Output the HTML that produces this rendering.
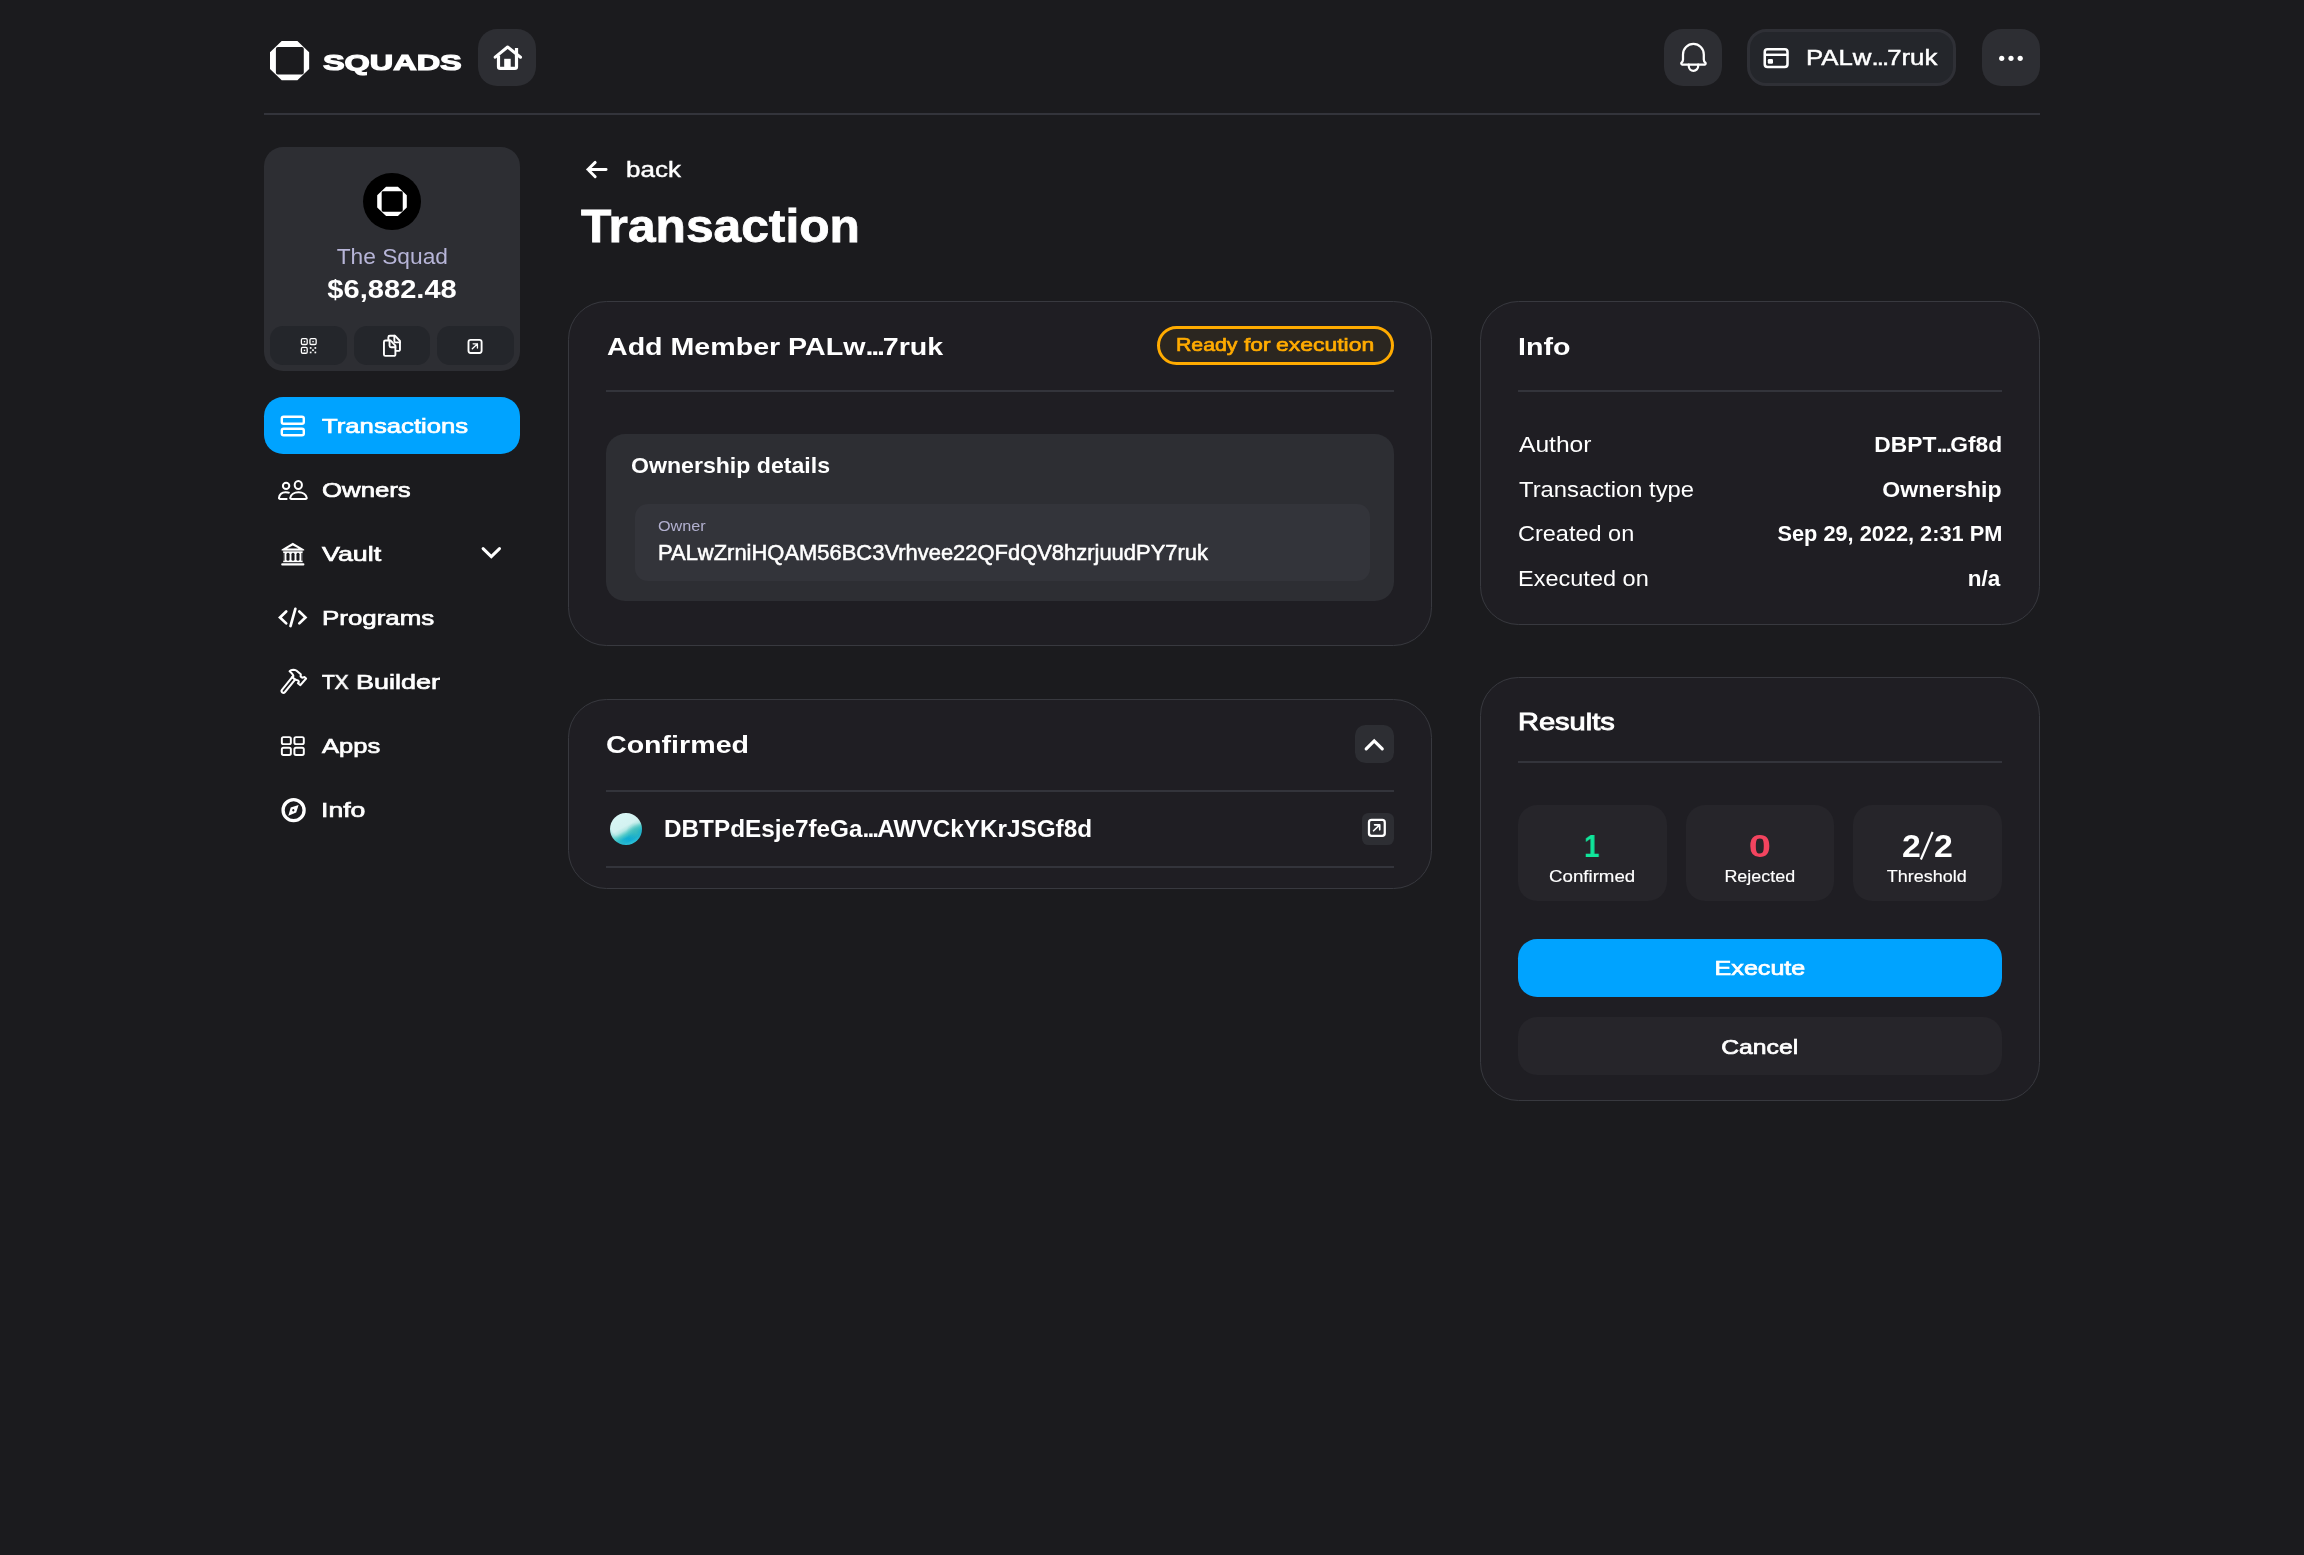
<!DOCTYPE html>
<html><head><meta charset="utf-8"><title>Squads - Transaction</title>
<style>
*{box-sizing:border-box;margin:0;padding:0}
html,body{width:2304px;height:1555px;background:#1b1b1e;color:#fff;font-family:"Liberation Sans",sans-serif}
.a{position:absolute}
.t{position:absolute;white-space:nowrap;line-height:1;will-change:transform}
.btn{position:absolute;background:#2d2e33;border-radius:19.2px}
.card{position:absolute;background:#1f1e23;border:1.7px solid #38393f;border-radius:38.4px}
.hr{position:absolute;height:2px;background:#33343b}
.sb{position:absolute;background:#24262b;border-radius:12.8px;top:326.2px;width:76.8px;height:38.4px}
.rb{position:absolute;background:#26252a;border-radius:19.2px;top:804.8px;width:148.3px;height:95.8px}
svg{position:absolute;overflow:visible}
</style></head><body>
<!-- HEADER -->
<div class="btn" style="left:478.4px;top:28.8px;width:57.6px;height:57.6px"></div>
<div class="btn" style="left:1664px;top:28.8px;width:57.6px;height:57.6px"></div>
<div class="btn" style="left:1747.2px;top:28.8px;width:209.3px;height:57.6px;background:#24262b;border:3.2px solid #2f3036"></div>
<div class="btn" style="left:1982.4px;top:28.8px;width:57.6px;height:57.6px"></div>
<div class="hr" style="left:264px;top:113.4px;width:1776px"></div>
<!-- SIDEBAR -->
<div class="a" style="left:264px;top:147px;width:256px;height:224px;background:#2d2e33;border-radius:19.2px"></div>
<div class="a" style="left:363.2px;top:172.8px;width:57.6px;height:57.6px;background:#000;border-radius:50%"></div>
<div class="sb" style="left:270.4px"></div>
<div class="sb" style="left:353.6px"></div>
<div class="sb" style="left:436.8px"></div>
<div class="a" style="left:264px;top:396.8px;width:256px;height:57.6px;background:#00a3ff;border-radius:19.2px"></div>
<!-- MAIN CARD 1 -->
<div class="card" style="left:568px;top:300.6px;width:864px;height:345.8px"></div>
<div class="hr" style="left:606.4px;top:390.4px;width:787.2px"></div>
<div class="a" style="left:606.4px;top:433.6px;width:787.2px;height:167.8px;background:#2d2e33;border-radius:19.2px"></div>
<div class="a" style="left:635.2px;top:504.2px;width:735px;height:76.4px;background:#33343a;border-radius:12.8px"></div>
<div class="a" style="left:1156.8px;top:325.8px;width:237.2px;height:39.6px;background:#2b2620;border:3.6px solid #ffab00;border-radius:20px"></div>
<!-- MAIN CARD 2 -->
<div class="card" style="left:568px;top:699.2px;width:864px;height:189.8px"></div>
<div class="hr" style="left:606.4px;top:790.4px;width:787.2px"></div>
<div class="hr" style="left:606.4px;top:865.5px;width:787.2px"></div>
<div class="a" style="left:1355.2px;top:724.7px;width:38.4px;height:38.4px;background:#2d2e33;border-radius:10.5px"></div>
<div class="a" style="left:1361.6px;top:812.7px;width:32px;height:32px;background:#2d2e33;border-radius:6.4px"></div>
<div class="a" style="left:609.6px;top:812.5px;width:32.2px;height:32.6px;border-radius:50%;background:radial-gradient(circle at 80% 60%,rgba(62,188,186,.8) 0%,rgba(62,188,186,0) 30%),radial-gradient(circle at 52% 30%,rgba(70,200,198,0) 58%,rgba(70,200,198,.5) 76%),linear-gradient(151deg,#d8f6f5 13%,#d3f2f1 43%,#b5e8e5 51%,#55cbc9 60%,#14b0d0 69%,#05a5d9 78%,#12bbe6 87%)"></div>
<!-- INFO CARD -->
<div class="card" style="left:1480px;top:300.6px;width:560px;height:324.8px"></div>
<div class="hr" style="left:1518.4px;top:390.4px;width:483.2px"></div>
<!-- RESULTS CARD -->
<div class="card" style="left:1480px;top:676.6px;width:560px;height:424.2px"></div>
<div class="hr" style="left:1518.4px;top:761.4px;width:483.2px"></div>
<div class="rb" style="left:1518.4px"></div>
<div class="rb" style="left:1685.9px"></div>
<div class="rb" style="left:1853.3px"></div>
<div class="a" style="left:1518.4px;top:939.2px;width:483.2px;height:57.6px;background:#00a3ff;border-radius:19.2px"></div>
<div class="a" style="left:1518.4px;top:1017.4px;width:483.2px;height:57.6px;background:#26252a;border-radius:19.2px"></div>

<!-- TEXT -->
<div class="t" style="left:323.40px;top:50.70px;font-size:22.8px;font-weight:700;color:#ffffff;transform:scaleX(1.4219);transform-origin:0 50%;-webkit-text-stroke:1.2px #ffffff">SQUADS</div>
<div class="t" style="left:1806.00px;top:47.80px;font-size:21.5px;font-weight:400;color:#ffffff;transform:scaleX(1.1991);transform-origin:0 50%;-webkit-text-stroke:0.45px #ffffff">PALw<span style="letter-spacing:-0.075em">...</span>7ruk</div>
<div class="t" style="left:339.87px;top:247.48px;font-size:21.4px;font-weight:400;color:#b7b5d8;transform:scaleX(1.0635);transform-origin:50% 50%">The Squad</div>
<div class="t" style="left:333.95px;top:276.01px;font-size:26.1px;font-weight:700;color:#ffffff;transform:scaleX(1.1146);transform-origin:50% 50%">$6,882.48</div>
<div class="t" style="left:321.90px;top:415.17px;font-size:21.0px;font-weight:400;color:#ffffff;transform:scaleX(1.2241);transform-origin:0 50%;-webkit-text-stroke:0.7px #ffffff">Transactions</div>
<div class="t" style="left:322.25px;top:479.17px;font-size:21.0px;font-weight:400;color:#ffffff;transform:scaleX(1.2265);transform-origin:0 50%;-webkit-text-stroke:0.7px #ffffff">Owners</div>
<div class="t" style="left:322.25px;top:543.32px;font-size:21.0px;font-weight:400;color:#ffffff;transform:scaleX(1.2761);transform-origin:0 50%;-webkit-text-stroke:0.7px #ffffff">Vault</div>
<div class="t" style="left:321.80px;top:607.42px;font-size:21.0px;font-weight:400;color:#ffffff;transform:scaleX(1.2336);transform-origin:0 50%;-webkit-text-stroke:0.7px #ffffff">Programs</div>
<div class="t" style="left:321.90px;top:735.17px;font-size:21.0px;font-weight:400;color:#ffffff;transform:scaleX(1.2157);transform-origin:0 50%;-webkit-text-stroke:0.7px #ffffff">Apps</div>
<div class="t" style="left:321.40px;top:799.17px;font-size:21.0px;font-weight:400;color:#ffffff;transform:scaleX(1.2674);transform-origin:0 50%;-webkit-text-stroke:0.7px #ffffff">Info</div>
<div class="t" style="left:626.40px;top:159.77px;font-size:21.3px;font-weight:400;color:#ffffff;transform:scaleX(1.2200);transform-origin:0 50%;-webkit-text-stroke:0.4px #ffffff">back</div>
<div class="t" style="left:581.00px;top:202.62px;font-size:46.4px;font-weight:700;color:#ffffff;transform:scaleX(1.0711);transform-origin:0 50%;-webkit-text-stroke:0.8px #ffffff">Transaction</div>
<div class="t" style="left:606.75px;top:334.59px;font-size:24.7px;font-weight:700;color:#ffffff;transform:scaleX(1.1582);transform-origin:0 50%">Add Member PALw<span style="letter-spacing:-0.075em">...</span>7ruk</div>
<div class="t" style="left:631.00px;top:455.47px;font-size:21.6px;font-weight:700;color:#ffffff;transform:scaleX(1.0699);transform-origin:0 50%">Ownership details</div>
<div class="t" style="left:658.00px;top:518.21px;font-size:15.4px;font-weight:400;color:#b2b0cf;transform:scaleX(1.0531);transform-origin:0 50%">Owner</div>
<div class="t" style="left:658.00px;top:541.96px;font-size:21.9px;font-weight:400;color:#ffffff;transform:scaleX(1.0023);transform-origin:0 50%;-webkit-text-stroke:0.55px #ffffff">PALwZrniHQAM56BC3Vrhvee22QFdQV8hzrjuudPY7ruk</div>
<div class="t" style="left:606.00px;top:732.84px;font-size:24.7px;font-weight:700;color:#ffffff;transform:scaleX(1.1585);transform-origin:0 50%">Confirmed</div>
<div class="t" style="left:664.00px;top:817.86px;font-size:23.2px;font-weight:700;color:#ffffff;transform:scaleX(1.0479);transform-origin:0 50%">DBTPdEsje7feGa<span style="letter-spacing:-0.075em">...</span>AWVCkYKrJSGf8d</div>
<div class="t" style="left:1517.80px;top:334.59px;font-size:24.7px;font-weight:700;color:#ffffff;transform:scaleX(1.1580);transform-origin:0 50%">Info</div>
<div class="t" style="left:1518.75px;top:433.72px;font-size:21.6px;font-weight:400;color:#ffffff;transform:scaleX(1.1395);transform-origin:0 50%">Author</div>
<div class="t" style="left:1518.75px;top:478.52px;font-size:21.6px;font-weight:400;color:#ffffff;transform:scaleX(1.1017);transform-origin:0 50%">Transaction type</div>
<div class="t" style="left:1517.60px;top:523.32px;font-size:21.6px;font-weight:400;color:#ffffff;transform:scaleX(1.0876);transform-origin:0 50%">Created on</div>
<div class="t" style="left:1518.00px;top:567.92px;font-size:21.6px;font-weight:400;color:#ffffff;transform:scaleX(1.0890);transform-origin:0 50%">Executed on</div>
<div class="t" style="left:1880.88px;top:433.72px;font-size:21.6px;font-weight:700;color:#ffffff;transform:scaleX(1.0547);transform-origin:100% 50%">DBPT<span style="letter-spacing:-0.075em">...</span>Gf8d</div>
<div class="t" style="left:1889.66px;top:478.52px;font-size:21.6px;font-weight:700;color:#ffffff;transform:scaleX(1.0686);transform-origin:100% 50%">Ownership</div>
<div class="t" style="left:1778.73px;top:523.32px;font-size:21.6px;font-weight:700;color:#ffffff;transform:scaleX(1.0066);transform-origin:100% 50%">Sep 29, 2022, 2:31 PM</div>
<div class="t" style="left:1968.50px;top:567.92px;font-size:21.6px;font-weight:700;color:#ffffff;transform:scaleX(1.0416);transform-origin:100% 50%">n/a</div>
<div class="t" style="left:1518.00px;top:710.47px;font-size:23.9px;font-weight:400;color:#ffffff;transform:scaleX(1.2144);transform-origin:0 50%;-webkit-text-stroke:0.9px #ffffff">Results</div>
<div class="t" style="left:1583.17px;top:831.42px;font-size:31.4px;font-weight:700;color:#10e69b;transform:scaleX(0.8987);transform-origin:50% 50%">1</div>
<div class="t" style="left:1751.17px;top:831.42px;font-size:31.4px;font-weight:700;color:#f3445f;transform:scaleX(1.2708);transform-origin:50% 50%">0</div>
<div class="t" style="left:1555.47px;top:867.87px;font-size:16.1px;font-weight:400;color:#ffffff;transform:scaleX(1.1616);transform-origin:50% 50%;-webkit-text-stroke:0.15px #ffffff">Confirmed</div>
<div class="t" style="left:1728.13px;top:867.87px;font-size:16.1px;font-weight:400;color:#ffffff;transform:scaleX(1.1136);transform-origin:50% 50%;-webkit-text-stroke:0.15px #ffffff">Rejected</div>
<div class="t" style="left:1891.21px;top:867.87px;font-size:16.1px;font-weight:400;color:#ffffff;transform:scaleX(1.1177);transform-origin:50% 50%;-webkit-text-stroke:0.15px #ffffff">Threshold</div>
<div class="t" style="left:1722.45px;top:957.42px;font-size:21.0px;font-weight:400;color:#ffffff;transform:scaleX(1.1958);transform-origin:50% 50%;-webkit-text-stroke:0.7px #ffffff">Execute</div>
<div class="t" style="left:1727.06px;top:1035.92px;font-size:21.0px;font-weight:400;color:#ffffff;transform:scaleX(1.1778);transform-origin:50% 50%;-webkit-text-stroke:0.7px #ffffff">Cancel</div>
<div class="t" style="left:1901.60px;top:831.42px;font-size:31.4px;font-weight:700;color:#ffffff;transform:scaleX(1.0762);transform-origin:0 50%">2</div>
<div class="t" style="left:1933.60px;top:831.42px;font-size:31.4px;font-weight:700;color:#ffffff;transform:scaleX(1.0762);transform-origin:0 50%">2</div>
<div class="t" style="left:1176.40px;top:335.42px;font-size:19.0px;font-weight:400;color:#ffab00;transform:scaleX(1.1198);transform-origin:0 50%;-webkit-text-stroke:0.7px #ffab00">Ready</div>
<div class="t" style="left:1244.00px;top:335.42px;font-size:19.0px;font-weight:400;color:#ffab00;transform:scaleX(1.1944);transform-origin:0 50%;-webkit-text-stroke:0.7px #ffab00">for</div>
<div class="t" style="left:1276.00px;top:335.42px;font-size:19.0px;font-weight:400;color:#ffab00;transform:scaleX(1.2072);transform-origin:0 50%;-webkit-text-stroke:0.7px #ffab00">execution</div>
<div class="t" style="left:321.50px;top:671.02px;font-size:21.0px;font-weight:400;color:#ffffff;transform:scaleX(0.9909);transform-origin:0 50%;-webkit-text-stroke:0.7px #ffffff">TX</div>
<div class="t" style="left:355.60px;top:671.02px;font-size:21.0px;font-weight:400;color:#ffffff;transform:scaleX(1.2849);transform-origin:0 50%;-webkit-text-stroke:0.7px #ffffff">Builder</div>
<!-- ICONS -->
<svg style="left:0;top:0" width="2304" height="1555" viewBox="0 0 2304 1555" fill="none" stroke="#fff" stroke-linecap="round" stroke-linejoin="round">
<!-- logos -->
<g transform="translate(270 41)"><path fill-rule="evenodd" d="M11.7 0H27.4L39.15 11.2V27.9L27.4 39.3H11.7L0 27.9V11.2ZM7.9 5.9H31.8a2 2 0 0 1 2 2V31.6a2 2 0 0 1-2 2H7.9a2 2 0 0 1-2-2V7.9a2 2 0 0 1 2-2Z" fill="#fff" stroke="none"/></g>
<g transform="translate(377.2 186.8) scale(0.756 0.746)"><path fill-rule="evenodd" d="M11.7 0H27.4L39.15 11.2V27.9L27.4 39.3H11.7L0 27.9V11.2ZM7.9 5.9H31.8a2 2 0 0 1 2 2V31.6a2 2 0 0 1-2 2H7.9a2 2 0 0 1-2-2V7.9a2 2 0 0 1 2-2Z" fill="#fff" stroke="none"/></g>
<!-- home -->
<path d="M495.2 57.2L507.6 47L520.5 57.2" stroke-width="3"/>
<path d="M498.5 55.5V66.8a1.6 1.6 0 0 0 1.6 1.6H514.9a1.6 1.6 0 0 0 1.6-1.6V55.5" stroke-width="3.2" stroke-linecap="butt"/>
<rect x="504.2" y="58.8" width="6.5" height="9.4" fill="#fff" stroke="none"/>
<rect x="514.9" y="48" width="3.2" height="8.5" fill="#fff" stroke="none"/>
<!-- bell -->
<path d="M1683 59.5V54.5A10.4 10.5 0 0 1 1703.8 54.5V59.5Q1703.8 61.5 1705.3 62.6A1.2 1.2 0 0 1 1704.8 64.65H1682.2A1.2 1.2 0 0 1 1681.6 62.6Q1683 61.5 1683 59.5Z" stroke-width="2.25"/>
<path d="M1688.75 64.65v1.4a4.72 4.72 0 0 0 9.45 0v-1.4" stroke-width="2.25"/>
<!-- card -->
<rect x="1764.75" y="49.2" width="22.75" height="17.7" rx="2.7" stroke-width="2.55"/>
<path d="M1764.75 54.8H1787.5" stroke-width="2.45" stroke-linecap="butt"/>
<rect x="1767.8" y="59.1" width="5.2" height="4.6" rx="1.2" fill="#fff" stroke="none"/>
<!-- dots -->
<g fill="#fff" stroke="none"><circle cx="2001.7" cy="58.3" r="2.6"/><circle cx="2011" cy="58.3" r="2.6"/><circle cx="2020.2" cy="58.3" r="2.6"/></g>
<!-- qr -->
<g stroke-width="1.3">
<rect x="301.4" y="338.6" width="5.8" height="5.9" rx="1.3"/>
<rect x="309.95" y="338.6" width="6.2" height="5.9" rx="1.3"/>
<rect x="301.4" y="347.45" width="5.8" height="5.8" rx="1.3"/>
</g>
<g fill="#fff" stroke="none">
<rect x="303.8" y="340.9" width="1.4" height="1.4"/><rect x="312.35" y="340.9" width="1.4" height="1.4"/><rect x="303.8" y="349.7" width="1.4" height="1.4"/>
<rect x="309.8" y="347.1" width="1.7" height="1.7"/><rect x="314.5" y="347.1" width="1.7" height="1.7"/><rect x="312.15" y="349.35" width="1.7" height="1.7"/><rect x="309.8" y="351.6" width="1.7" height="1.7"/><rect x="314.5" y="351.6" width="1.7" height="1.7"/>
</g>
<!-- copy -->
<g stroke-width="1.9">
<path d="M385.45 340.45H390.5L395.4 345.7V354.4a1.5 1.5 0 0 1-1.5 1.5H385.45a1.5 1.5 0 0 1-1.5-1.5V341.95a1.5 1.5 0 0 1 1.5-1.5Z"/>
<path d="M389.54 340.45V345.8a1.5 1.5 0 0 0 1.5 1.5H395.4"/>
<path d="M388.38 339.4V337.3a1.5 1.5 0 0 1 1.5-1.5H395.1L399.96 341V349.4a1.5 1.5 0 0 1-1.5 1.5H396.5"/>
<path d="M394.36 335.82V340.9a1.5 1.5 0 0 0 1.5 1.5H399.96"/>
</g>
<!-- link small + big -->
<g transform="translate(475.05 346.4) scale(0.83)"><rect x="-7.9" y="-7.9" width="15.8" height="15.8" rx="2.6" stroke-width="2.25"/>
<path d="M-3.3 2.9 L2.85 -3.05 M-2.3 -3.05 H2.85 V2" stroke-width="1.65"/></g>
<g transform="translate(1376.87 827.87)"><rect x="-7.9" y="-7.9" width="15.8" height="15.8" rx="2.6" stroke-width="2.25"/>
<path d="M-3.3 2.9 L2.85 -3.05 M-2.3 -3.05 H2.85 V2" stroke-width="1.65"/></g>
<!-- transactions icon -->
<rect x="281.8" y="416.8" width="22" height="7" rx="1.8" stroke-width="2.4"/>
<rect x="281.8" y="428.7" width="22" height="6.6" rx="1.8" stroke-width="2.4"/>
<!-- people -->
<g stroke-width="2">
<ellipse cx="298.3" cy="484.95" rx="3.6" ry="4"/>
<ellipse cx="286.1" cy="485.9" rx="3.2" ry="3.05"/>
<path d="M291.4 499.1H305.6a1.15 1.15 0 0 0 1.15-1.3C306.2 494.6 302.9 492.2 298.5 492.2C294.1 492.2 290.8 494.6 290.25 497.8a1.15 1.15 0 0 0 1.15 1.3Z"/>
<path d="M289.6 492.9C288.4 492.4 287 492.15 285.6 492.15C281.8 492.15 279.4 494.6 279 497.8a1.15 1.15 0 0 0 1.15 1.3H287.4" stroke-linecap="butt"/>
</g>
<!-- bank -->
<g fill="#fff" stroke="none">
<path fill-rule="evenodd" d="M292.8 542.7L304.2 549.5V550.4H281.6V549.5ZM292.8 545.4L287 548.5H298.6Z"/>
<rect x="282.8" y="550.4" width="20" height="1" opacity=".5"/>
<rect x="283.2" y="551.4" width="19.4" height="10.8"/>
<rect x="281.2" y="563.2" width="23.2" height="2.4" rx="1"/>
</g>
<g fill="#1b1b1e" stroke="none">
<rect x="286.45" y="552.8" width="3.1" height="8" rx="1.5"/><rect x="291.45" y="552.8" width="3.1" height="8" rx="1.5"/><rect x="296.45" y="552.8" width="3.05" height="8" rx="1.5"/>
<path d="M283.2 552.9h1.3v7.8h-1.3zM301.4 552.9h1.3v7.8h-1.3z"/>
</g>
<!-- code -->
<g stroke-width="2.7" stroke-linejoin="miter">
<path d="M286.2 611.5L280 617.4L286.2 623.35"/>
<path d="M299.3 611.5L305.45 617.4L299.3 623.35"/>
<path d="M295.35 608.76L290.49 626.05"/>
</g>
<!-- hammer -->
<g stroke-width="2.05">
<path d="M292.2 677.1L281.95 689.9A1.85 1.85 0 0 0 284.8 692.25L295.1 679.6Z"/>
<path d="M292.2 677.1L293.4 676Q293.2 674.2 289.6 671.3Q291 669.8 293.2 669.7Q295 669.7 296.3 670.5L300.8 674.3L300.6 676.4Q301.5 677.8 302.85 677.6L304.4 677L306.1 678.5L300.4 685.1L297.9 683.2Q299.3 682 298.8 681.2Q298 680 296.7 679.9L295.1 679.6"/>
</g>
<!-- grid -->
<g stroke-width="1.95">
<rect x="281.85" y="737.1" width="9" height="7" rx="1.6"/><rect x="294.4" y="737.1" width="9.4" height="7" rx="1.6"/>
<rect x="281.85" y="747.7" width="9" height="7.2" rx="1.6"/><rect x="294.4" y="747.7" width="9.4" height="7.2" rx="1.6"/>
</g>
<!-- compass -->
<circle cx="293.6" cy="810.2" r="10.5" stroke-width="3.3"/>
<path fill="#fff" stroke="none" fill-rule="evenodd" d="M298.6 804.9L296.2 812.5L288.3 815.8L290.7 807.6ZM293.3 809.1a1.15 1.15 0 1 0 .01 0Z"/>
<!-- back arrow -->
<path d="M595.2 162.4L588 169.56L595.2 176.8M588 169.56H606.1" stroke-width="2.9" stroke-linejoin="miter"/>
<!-- chevrons -->
<path d="M483.1 548.6L491.3 556.6L499.5 548.6" stroke-width="3" stroke-linejoin="miter"/>
<path d="M1366.2 748.9L1374.2 740.95L1382.25 748.9" stroke-width="3.2" stroke-linejoin="miter"/>
<!-- slash in 2/2 -->
<path d="M1932.6 832L1920.9 859.5" stroke-width="2.2" stroke-linecap="butt"/>
</svg>

</body></html>
